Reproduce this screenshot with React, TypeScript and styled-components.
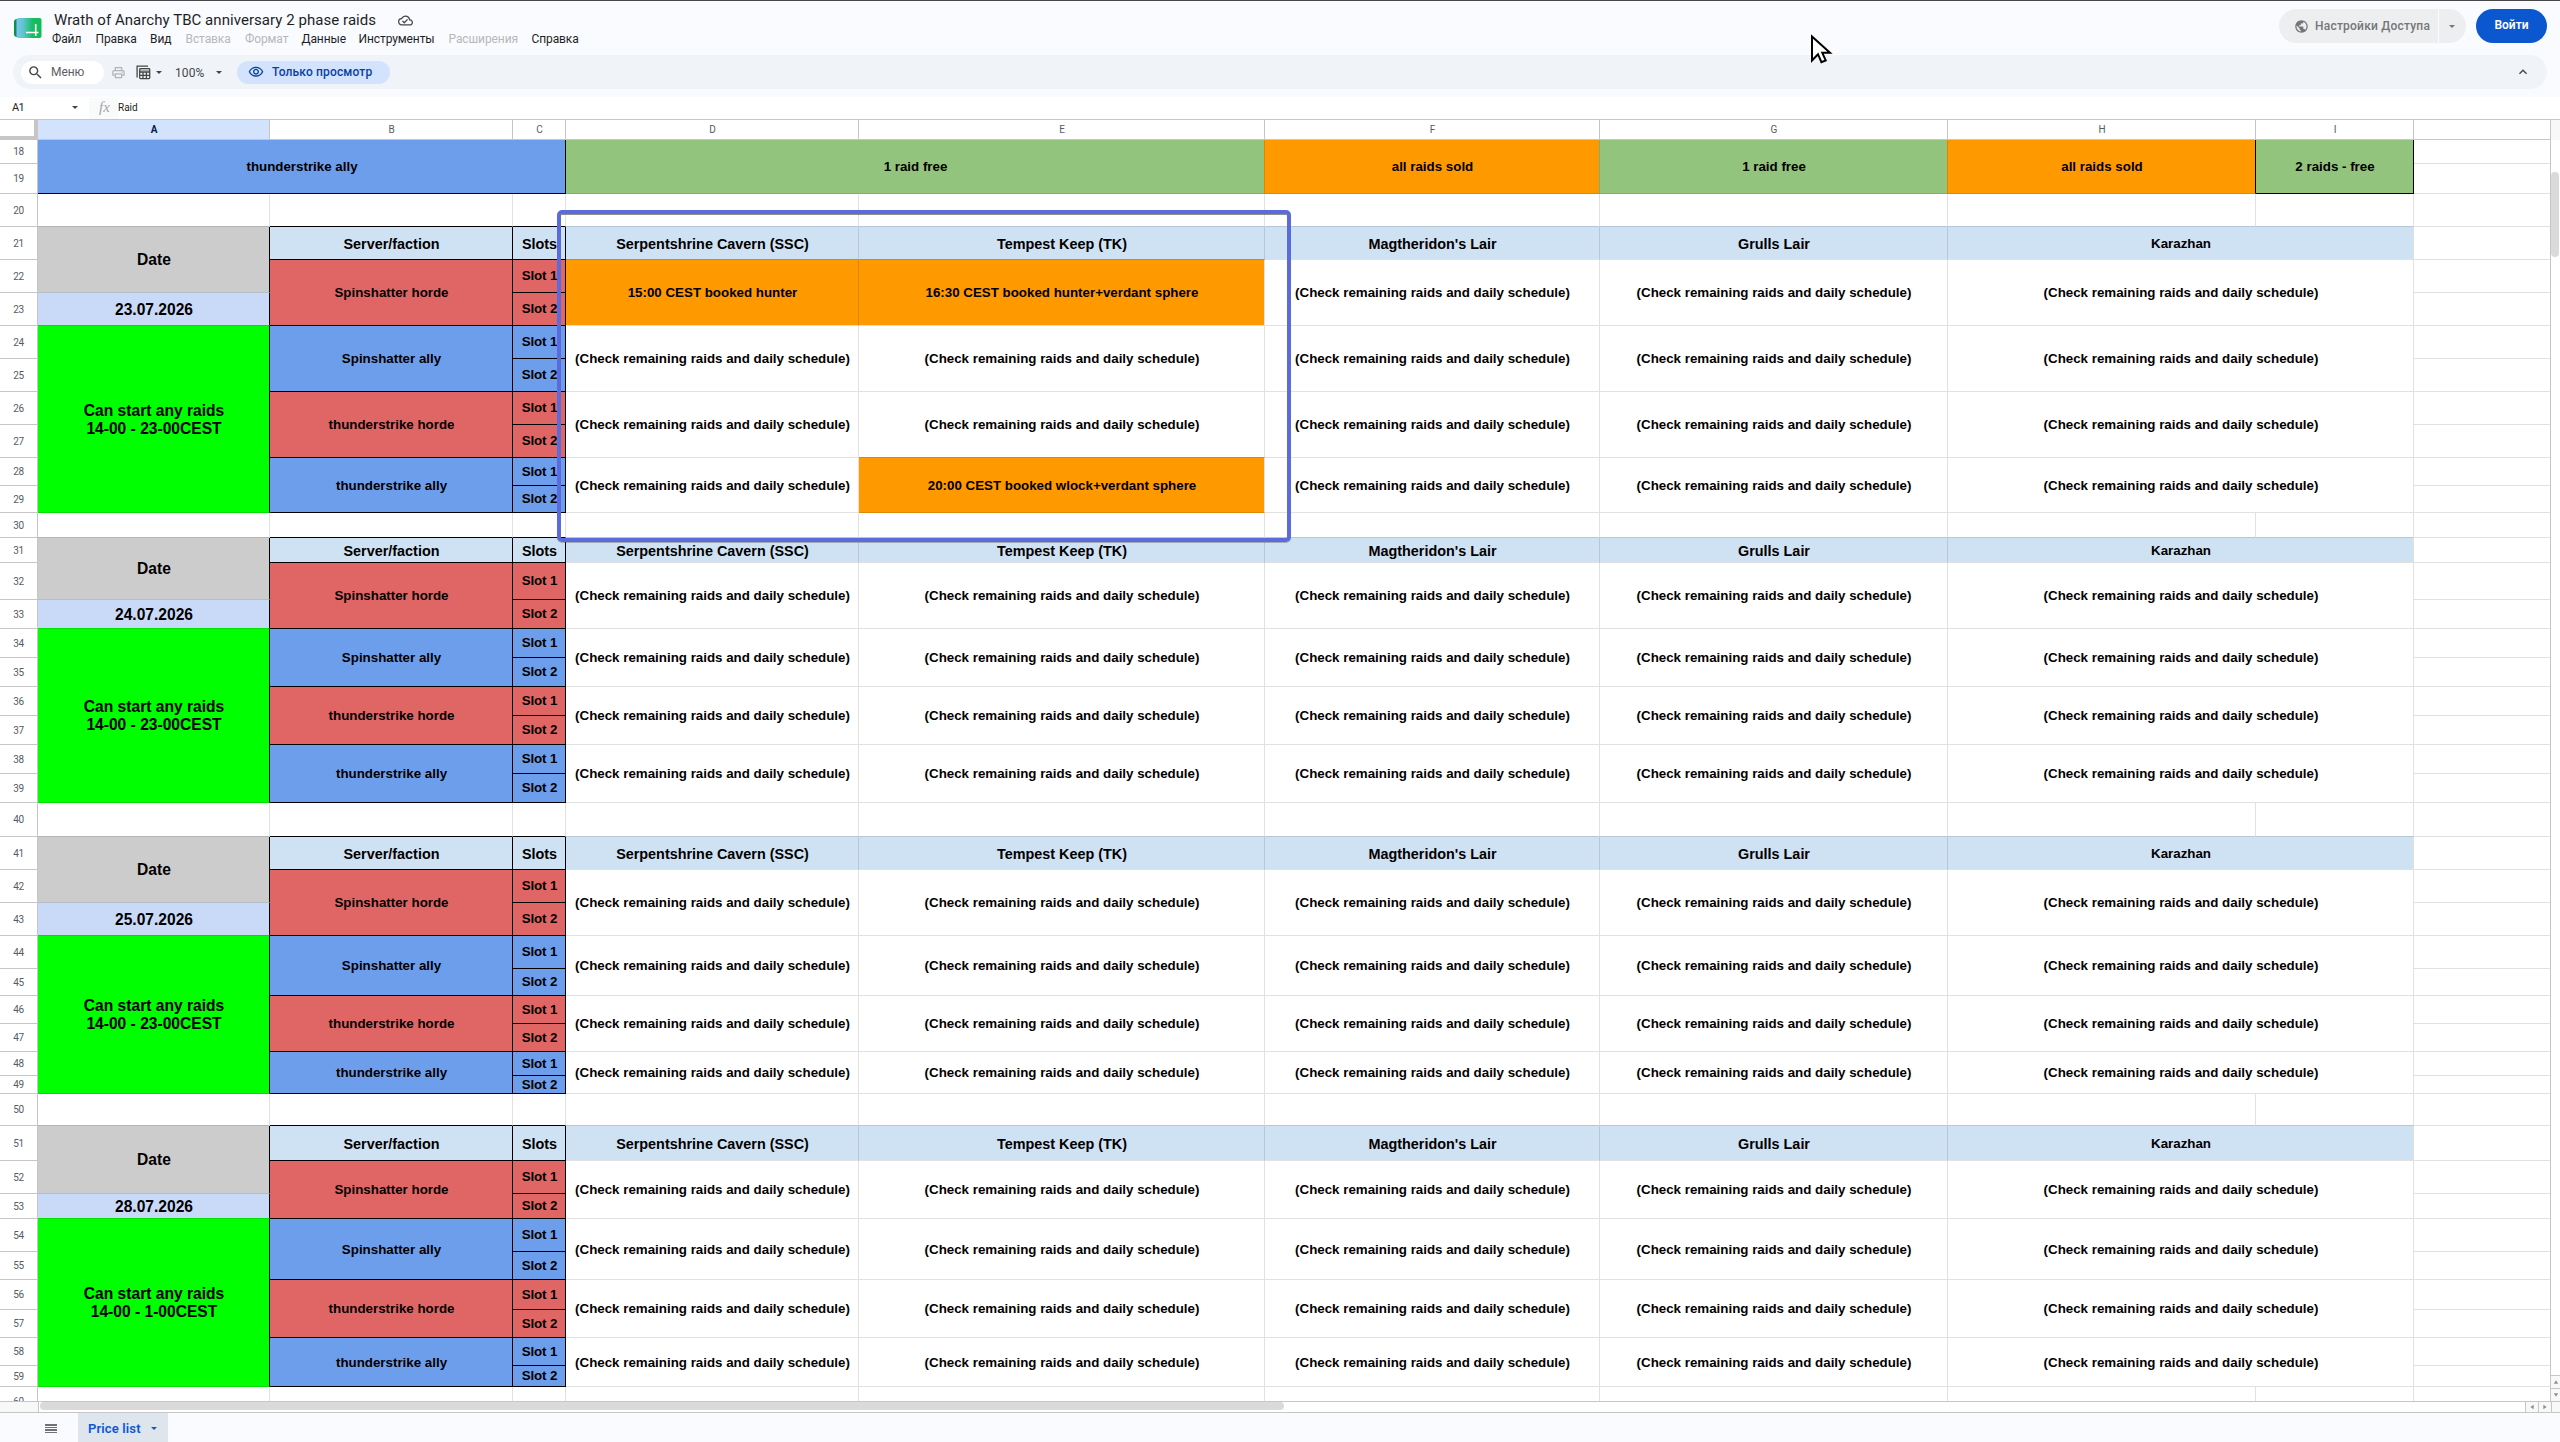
import React from 'react';
import styled, { createGlobalStyle } from 'styled-components';
import {
  MdSearch,
  MdOutlinePrint,
  MdOutlineVisibility,
  MdPublic,
  MdOutlineCloudDone,
  MdKeyboardArrowUp,
} from 'react-icons/md';

const color = {
  chrome: '#f9fbff',
  toolbar: '#f0f3f8',
  line: '#c6c6c6',
  grid: '#e1e1e1',
  text: '#1f1f1f',
  muted: '#b6b8ba',
  accent: '#0b57d0',
  red: '#e06666',
  blue: '#6d9eeb',
  green: '#93c47d',
  greenEdge: '#81ad6e',
  orange: '#ff9900',
  orangeEdge: '#e08700',
  head: '#cfe2f3',
  headEdge: '#b6c7d6',
  date: '#cccccc',
  dateEdge: '#b4b4b4',
  day: '#c9daf8',
  lime: '#00ff00',
  limeEdge: '#00e000',
};

const GlobalStyle = createGlobalStyle`
  * { box-sizing: border-box; }
  body {
    margin: 0;
    overflow: hidden;
    background: #fff;
    font-family: Roboto, "Liberation Sans", sans-serif;
    color: ${color.text};
  }
`;

/* ---------- application chrome ---------- */

const Page = styled.div`
  display: flex;
  flex-direction: column;
  width: 2560px;
  height: 1442px;
  overflow: hidden;
`;

const Header = styled.header`
  display: flex;
  flex: none;
  height: 55px;
  border-top: 1px solid #43474b;
  background: ${color.chrome};
`;

const LogoBox = styled.div`
  width: 52px;
  padding: 16px 0 0 13px;
`;

const Titles = styled.div`
  flex: 1;
  padding-top: 9px;
`;

const TitleRow = styled.div`
  display: flex;
  align-items: center;
  height: 20px;
  padding-left: 2px;
`;

const DocTitle = styled.h1`
  width: 344px;
  margin: 0;
  font-size: 15px;
  font-weight: 400;
  letter-spacing: 0.05px;
  line-height: 20px;
  white-space: nowrap;

  & + svg {
    color: #444746;
  }
`;

const MenuBar = styled.nav`
  display: grid;
  grid-template-columns: 43.5px 54.5px 35.5px 59.5px 56.5px 57px 90px 83px auto;
  justify-content: start;
  line-height: 18px;
  font-size: 12px;
  letter-spacing: -0.1px;
  white-space: nowrap;
`;

const MenuItem = styled.span<{ $off?: boolean }>`
  color: ${(p) => (p.$off ? color.muted : color.text)};
`;

const Actions = styled.div`
  display: flex;
  align-items: flex-start;
  padding: 8px 13px 0 0;
`;

const ShareMain = styled.div`
  display: flex;
  align-items: center;
  gap: 6px;
  width: 159px;
  height: 34px;
  padding-left: 15px;
  border-radius: 17px 0 0 17px;
  background: #edeeef;
  color: #747678;
  font-size: 12px;
  font-weight: 500;
  letter-spacing: 0.22px;
  white-space: nowrap;
`;

const ShareMore = styled.div`
  display: flex;
  align-items: center;
  justify-content: center;
  width: 27px;
  height: 34px;
  margin: 0 10px 0 1px;
  padding-right: 1px;
  border-radius: 0 17px 17px 0;
  background: #edeeef;
`;

const SignIn = styled.button`
  width: 71px;
  height: 34px;
  padding: 0 0 2px;
  border: 0;
  border-radius: 17px;
  background: ${color.accent};
  color: #fff;
  font: 600 12px Roboto, sans-serif;
`;

const ToolbarArea = styled.div`
  display: flex;
  flex: none;
  height: 43px;
  padding: 0 13px 9px;
  background: ${color.chrome};
`;

const Toolbar = styled.div`
  display: flex;
  flex: 1;
  align-items: center;
  height: 34px;
  padding: 0 16px 0 8px;
  border-radius: 17px;
  background: ${color.toolbar};
  font-size: 12px;
  color: #444746;
`;

const SearchPill = styled.div`
  display: flex;
  align-items: center;
  gap: 7px;
  width: 83px;
  height: 23px;
  padding-left: 6px;
  border-radius: 12px;
  background: #fff;
  color: #5b5e60;
  letter-spacing: -0.1px;

  svg { color: #444746; }
`;

const PrintTool = styled.div`
  display: flex;
  margin: 1px 10px 0 7px;
  color: #b2b5b8;
`;

const ViewsTool = styled.div`
  display: flex;
  align-items: center;
  gap: 5px;
  width: 39px;
  padding-top: 1px;
`;

const ZoomTool = styled.div`
  display: flex;
  align-items: center;
  justify-content: space-between;
  width: 47px;
  margin-right: 15px;
  padding-top: 1px;
  letter-spacing: 0.1px;
`;

const ViewOnly = styled.div`
  display: flex;
  align-items: center;
  gap: 8px;
  width: 153px;
  height: 23px;
  margin-right: auto;
  padding-left: 11px;
  border-radius: 12px;
  background: #d3e3fd;
  color: #0842a0;
  font-weight: 500;
  letter-spacing: 0.16px;
  white-space: nowrap;
`;

const FormulaBar = styled.div`
  display: flex;
  flex: none;
  align-items: center;
  height: 22px;
  margin-top: -1px;
  padding-top: 1px;
  background: #fff;
  font-size: 11px;
`;

const NameBox = styled.div`
  display: flex;
  align-items: center;
  justify-content: space-between;
  width: 89px;
  height: 21px;
  padding: 0 11px 3px 12px;
  letter-spacing: -0.6px;
`;

const FxLabel = styled.div`
  width: 29px;
  height: 21px;
  padding: 0 0 0 10px;
  background: #f9fafa;
  color: #a3a5a7;
  font: italic 15px/19px "Liberation Serif", serif;
`;

const FormulaText = styled.div`
  padding: 0 0 3px 0;
  font-size: 10px;
`;

const Caret = styled.i<{ $size?: number; $color?: string }>`
  display: block;
  width: 0;
  height: 0;
  border: ${(p) => p.$size ?? 3}px solid transparent;
  border-top-color: ${(p) => p.$color ?? '#444746'};
  border-bottom-width: 0;
`;

/* ---------- sheet ---------- */

const SheetArea = styled.div`
  position: relative;
  display: flex;
  flex: none;
  height: 1282px;
  border-top: 1px solid ${color.line};
  overflow: hidden;
`;

const ROWS = [
  24, 30, 33, 33, 33, 33, 33, 33, 33, 33, 28, 27, 25, 25, 37, 29, 29, 29, 29, 29, 29, 29, 34,
  33, 33, 33, 33, 27, 28, 28, 24, 18, 32, 35, 33, 25, 33, 28, 30, 28, 28, 21, 30,
];
const FIRST_ROW = 18;

const Grid = styled.div`
  display: grid;
  flex: none;
  width: 2550px;
  height: 1281px;
  overflow: hidden;
  grid-template-columns: 38px 232px 243px 53px 293px 406px 335px 348px 308px 158px 136px;
  grid-template-rows: 20px ${ROWS.map((h) => `${h}px`).join(' ')};
`;

const Corner = styled.div`
  border-right: 4px solid ${color.line};
  border-bottom: 4px solid ${color.line};
`;

const ColumnHead = styled.div<{ $active?: boolean }>`
  display: flex;
  align-items: center;
  justify-content: center;
  padding-left: 1px;
  border-right: 1px solid ${color.line};
  border-bottom: 1px solid ${color.line};
  background: ${(p) => (p.$active ? '#d3e3fd' : '#fff')};
  color: ${(p) => (p.$active ? '#041e49' : '#575b5f')};
  font-size: 10px;
  font-weight: ${(p) => (p.$active ? 700 : 400)};
`;

const LastColumnHead = styled(ColumnHead)`
  border-right: 0;
`;

const RowHead = styled.div<{ $row: number }>`
  grid-column: 1;
  grid-row: ${(p) => p.$row - FIRST_ROW + 2};
  display: flex;
  align-items: center;
  justify-content: center;
  border-right: 1px solid ${color.line};
  border-bottom: 1px solid ${color.line};
  color: #575b5f;
  font-size: 10px;
  letter-spacing: -0.3px;
`;

type CellProps = {
  $col: number;
  $row: number;
  $cols?: number;
  $rows?: number;
  $fill?: string;
  $right?: string;
  $bottom?: string;
};

const Cell = styled.div<CellProps>`
  grid-column: ${(p) => p.$col + 1} / span ${(p) => p.$cols ?? 1};
  grid-row: ${(p) => p.$row - FIRST_ROW + 2} / span ${(p) => p.$rows ?? 1};
  display: flex;
  align-items: center;
  justify-content: center;
  min-width: 0;
  padding: 1px 0 0 1px;
  overflow: hidden;
  border-right: 1px solid ${(p) => p.$right ?? color.grid};
  border-bottom: 1px solid ${(p) => p.$bottom ?? color.grid};
  background: ${(p) => p.$fill ?? '#fff'};
  color: #000;
  font: bold 13.333px/16px "Liberation Sans", Arial, sans-serif;
  text-align: center;
  white-space: pre;
`;

const HeadCell = styled(Cell)`
  padding-top: 2px;
  font-size: 14.4px;
`;

const RaidHeadCell = styled(HeadCell)<{ $small?: boolean }>`
  padding-top: ${(p) => (p.$small ? 1 : 2)}px;
  font-size: ${(p) => (p.$small ? 13.333 : 14.4)}px;
`;

const SlotCell = styled(Cell)`
  padding-top: 0;
  letter-spacing: -0.1px;
`;

const DateCell = styled(Cell)`
  font-size: 15.6px;
  line-height: 18px;
`;

const EdgeCell = styled(Cell)`
  border-right: 0;
`;

/* The highlight frame and the pointer lie over the sheet. */
const Highlight = styled.div`
  position: absolute;
  left: 557px;
  top: 90px;
  width: 734px;
  height: 332px;
  border: 4px solid #5b6bdc;
  border-radius: 5px;
  box-shadow: inset 0 1px 0 rgba(70, 70, 70, 0.6), 0 1px 0 rgba(70, 70, 70, 0.35);
`;

const Pointer = styled.svg`
  position: absolute;
  left: 1810px;
  top: 33px;
`;

const VScroll = styled.div`
  display: flex;
  flex-direction: column;
  width: 10px;
  border-left: 1px solid ${color.line};
  background: #fff;
`;

const VScrollTop = styled.div`
  height: 20px;
  margin-bottom: 32px;
  background: #f8f8f8;
`;

const VThumb = styled.div`
  width: 8px;
  height: 85px;
  margin-bottom: auto;
  border-radius: 4px;
  background: #dadada;
`;

const VButton = styled.div`
  display: flex;
  align-items: center;
  justify-content: center;
  height: 13px;
  border-top: 1px solid ${color.line};
  background: #f8f8f8;
`;

const HScroll = styled.div`
  display: flex;
  flex: none;
  height: 12px;
  border-top: 1px solid ${color.line};
  border-bottom: 1px solid ${color.line};
  background: #fff;
`;

const HScrollStart = styled.div`
  width: 39px;
  border-right: 1px solid ${color.line};
  background: #f8f8f8;
`;

const HThumb = styled.div`
  width: 1244px;
  height: 8px;
  margin: 0 auto 0 1px;
  border-radius: 4px;
  background: #dadada;
`;

const HButton = styled.div`
  display: flex;
  align-items: center;
  justify-content: center;
  width: 13px;
  border-left: 1px solid ${color.line};
  background: #f8f8f8;
`;

const ScrollCorner = styled.div`
  width: 9px;
  border-left: 1px solid ${color.line};
  background: #f8f8f8;
`;

const TabBar = styled.footer`
  display: flex;
  flex: 1;
  padding-left: 45px;
  background: ${color.chrome};
`;

const AllSheets = styled.div`
  display: flex;
  flex-direction: column;
  justify-content: center;
  gap: 1px;
  width: 33px;
  padding-top: 2px;
`;

const Bar = styled.i`
  width: 12px;
  height: 1.5px;
  background: #6f7275;
`;

const Tab = styled.div`
  display: flex;
  align-items: center;
  justify-content: space-between;
  width: 90px;
  padding: 2px 11px 0 10px;
  background: #dfe5ed;
  color: ${color.accent};
  font-size: 13px;
  font-weight: 600;
  letter-spacing: 0.15px;
`;

/* ---------- icons ---------- */

const Logo = () => (
  <svg width="29" height="22" viewBox="0 0 29 22">
    <defs>
      <linearGradient id="sheet" x1="0" x2="1">
        <stop offset="0" stopColor="#7cc4fb" />
        <stop offset="0.25" stopColor="#62c5cf" />
        <stop offset="0.65" stopColor="#16bd63" />
        <stop offset="1" stopColor="#12bb56" />
      </linearGradient>
    </defs>
    <rect x="1" y="2" width="12" height="18" rx="3" fill="#0c9048" />
    <rect x="3.5" y="1" width="25" height="20" rx="2" fill="url(#sheet)" />
    <path d="M13 15.5h12.5M22.7 7v12" stroke="#fff" strokeWidth="1.6" />
  </svg>
);

const ViewsIcon = () => (
  <svg width="15" height="15" viewBox="0 0 15 15" fill="none" stroke="#444746" strokeWidth="1.3">
    <path d="M1.1 12.5V1.1h11" />
    <rect x="3.7" y="3.6" width="10" height="10" rx="0.8" />
    <path d="M3.7 7h10M3.7 10.3h10M7 7v6.6M10.4 7v6.6" />
    <path d="M4 5.3h9.4" strokeWidth="1" opacity="0.5" />
  </svg>
);

const ScrollArrow = ({ turn }: { turn: number }) => (
  <svg width="6" height="6" viewBox="0 0 6 6">
    <path d="M3 1.3 5.2 4.7H.8z" fill="#8f8f8f" transform={`rotate(${turn} 3 3)`} />
  </svg>
);

/* ---------- data ---------- */

const MENU: [string, boolean][] = [
  ['Файл', false],
  ['Правка', false],
  ['Вид', false],
  ['Вставка', true],
  ['Формат', true],
  ['Данные', false],
  ['Инструменты', false],
  ['Расширения', true],
  ['Справка', false],
];

const RAIDS = ['Serpentshrine Cavern (SSC)', 'Tempest Keep (TK)', "Magtheridon's Lair", 'Grulls Lair', 'Karazhan'];
const TEAMS = ['Spinshatter horde', 'Spinshatter ally', 'thunderstrike horde', 'thunderstrike ally'];
const DEFAULT_TEXT = '(Check remaining raids and daily schedule)';

type Block = { row: number; date: string; hours: string; booked: Record<string, string> };

const BLOCKS: Block[] = [
  {
    row: 21,
    date: '23.07.2026',
    hours: '14-00 - 23-00CEST',
    booked: {
      '0-0': '15:00 CEST booked hunter',
      '0-1': '16:30 CEST booked hunter+verdant sphere',
      '3-1': '20:00 CEST booked wlock+verdant sphere',
    },
  },
  { row: 31, date: '24.07.2026', hours: '14-00 - 23-00CEST', booked: {} },
  { row: 41, date: '25.07.2026', hours: '14-00 - 23-00CEST', booked: {} },
  { row: 51, date: '28.07.2026', hours: '14-00 - 1-00CEST', booked: {} },
];

const SummaryRows = () => (
  <>
    <Cell $col={1} $cols={3} $row={18} $rows={2} $fill={color.blue} $right="#000" $bottom="#000">thunderstrike ally</Cell>
    <Cell $col={4} $cols={2} $row={18} $rows={2} $fill={color.green} $right={color.orangeEdge} $bottom={color.greenEdge}>1 raid free</Cell>
    <Cell $col={6} $row={18} $rows={2} $fill={color.orange} $right={color.greenEdge} $bottom={color.orangeEdge}>all raids sold</Cell>
    <Cell $col={7} $row={18} $rows={2} $fill={color.green} $right={color.orangeEdge} $bottom={color.greenEdge}>1 raid free</Cell>
    <Cell $col={8} $row={18} $rows={2} $fill={color.orange} $right="#000" $bottom={color.orangeEdge}>all raids sold</Cell>
    <Cell $col={9} $row={18} $rows={2} $fill={color.green} $right="#000" $bottom="#000">2 raids - free</Cell>
  </>
);

const SpacerRow = ({ row }: { row: number }) => (
  <>
    {[1, 2, 3, 4, 5, 6, 7, 8, 9].map((col) => (
      <Cell
        key={col}
        $col={col}
        $row={row}
        $bottom={col === 1 ? color.dateEdge : col < 4 ? '#000' : color.headEdge}
      />
    ))}
  </>
);

const DayBlock = ({ row, date, hours, booked }: Block) => (
  <>
    <DateCell $col={1} $row={row} $rows={2} $fill={color.date} $right="#000" $bottom="#b5bdcb">Date</DateCell>
    <DateCell $col={1} $row={row + 2} $fill={color.day} $right="#000" $bottom={color.limeEdge}>{date}</DateCell>
    <DateCell $col={1} $row={row + 3} $rows={6} $fill={color.lime} $right="#000" $bottom={color.limeEdge}>
      {`Can start any raids\n${hours}`}
    </DateCell>
    <HeadCell $col={2} $row={row} $fill={color.head} $right="#000" $bottom="#000">Server/faction</HeadCell>
    <HeadCell $col={3} $row={row} $fill={color.head} $right="#000" $bottom="#000">Slots</HeadCell>
    {RAIDS.map((raid, r) => (
      <RaidHeadCell
        key={raid}
        $small={r === 4}
        $col={4 + r}
        $cols={r === 4 ? 2 : 1}
        $row={row}
        $fill={color.head}
        $right={r === 4 ? color.grid : color.headEdge}
        $bottom={booked[`0-${r}`] ? color.orangeEdge : color.grid}
      >
        {raid}
      </RaidHeadCell>
    ))}
    {TEAMS.map((team, t) => {
      const top = row + 1 + t * 2;
      const fill = t % 2 ? color.blue : color.red;
      return (
        <React.Fragment key={team}>
          <Cell $col={2} $row={top} $rows={2} $fill={fill} $right="#000" $bottom="#000">{team}</Cell>
          <SlotCell $col={3} $row={top} $fill={fill} $right="#000" $bottom="#000">Slot 1</SlotCell>
          <SlotCell $col={3} $row={top + 1} $fill={fill} $right="#000" $bottom="#000">Slot 2</SlotCell>
          {RAIDS.map((raid, r) => {
            const text = booked[`${t}-${r}`];
            const below = booked[`${t + 1}-${r}`];
            return (
              <Cell
                key={raid}
                $col={4 + r}
                $cols={r === 4 ? 2 : 1}
                $row={top}
                $rows={2}
                $fill={text ? color.orange : undefined}
                $right={booked[`${t}-${r + 1}`] && text ? color.orangeEdge : undefined}
                $bottom={below || (text && t === 3) ? color.orangeEdge : undefined}
              >
                {text ?? DEFAULT_TEXT}
              </Cell>
            );
          })}
        </React.Fragment>
      );
    })}
  </>
);

export default function App() {
  return (
    <Page>
      <GlobalStyle />
      <Header>
        <LogoBox><Logo /></LogoBox>
        <Titles>
          <TitleRow>
            <DocTitle>Wrath of Anarchy TBC anniversary 2 phase raids</DocTitle>
            <MdOutlineCloudDone size={15} />
          </TitleRow>
          <MenuBar>
            {MENU.map(([label, off]) => <MenuItem key={label} $off={off}>{label}</MenuItem>)}
          </MenuBar>
        </Titles>
        <Actions>
          <ShareMain><MdPublic size={15} />Настройки Доступа</ShareMain>
          <ShareMore><Caret $color="#747678" /></ShareMore>
          <SignIn>Войти</SignIn>
        </Actions>
      </Header>
      <ToolbarArea>
        <Toolbar>
          <SearchPill><MdSearch size={17} />Меню</SearchPill>
          <PrintTool><MdOutlinePrint size={15} /></PrintTool>
          <ViewsTool><ViewsIcon /><Caret /></ViewsTool>
          <ZoomTool>100%<Caret /></ZoomTool>
          <ViewOnly><MdOutlineVisibility size={16} />Только просмотр</ViewOnly>
          <MdKeyboardArrowUp size={16} />
        </Toolbar>
      </ToolbarArea>
      <FormulaBar>
        <NameBox>A1<Caret /></NameBox>
        <FxLabel>fx</FxLabel>
        <FormulaText>Raid</FormulaText>
      </FormulaBar>
      <SheetArea>
        <Grid>
          <Corner />
          {['A', 'B', 'C', 'D', 'E', 'F', 'G', 'H', 'I'].map((name) => (
            <ColumnHead key={name} $active={name === 'A'}>{name}</ColumnHead>
          ))}
          <LastColumnHead />
          {ROWS.map((_, i) => (
            <React.Fragment key={i}>
              <RowHead $row={FIRST_ROW + i}>{FIRST_ROW + i}</RowHead>
              <EdgeCell $col={10} $row={FIRST_ROW + i} />
            </React.Fragment>
          ))}
          <SummaryRows />
          {BLOCKS.map((block) => (
            <React.Fragment key={block.row}>
              <SpacerRow row={block.row - 1} />
              <DayBlock {...block} />
            </React.Fragment>
          ))}
          <SpacerRow row={60} />
        </Grid>
        <VScroll>
          <VScrollTop />
          <VThumb />
          <VButton><ScrollArrow turn={0} /></VButton>
          <VButton><ScrollArrow turn={180} /></VButton>
        </VScroll>
        <Highlight />
      </SheetArea>
      <HScroll>
        <HScrollStart />
        <HThumb />
        <HButton><ScrollArrow turn={-90} /></HButton>
        <HButton><ScrollArrow turn={90} /></HButton>
        <ScrollCorner />
      </HScroll>
      <TabBar>
        <AllSheets><Bar /><Bar /><Bar /><Bar /></AllSheets>
        <Tab>Price list<Caret $color={color.accent} /></Tab>
      </TabBar>
      <Pointer width="24" height="32" viewBox="0 0 24 32">
        <path
          d="M2 3.5v24l6-6.3 3.4 8 4.3-1.8-3.4-7.6h7.7z"
          fill="#fff"
          stroke="#000"
          strokeWidth="2"
        />
      </Pointer>
    </Page>
  );
}
